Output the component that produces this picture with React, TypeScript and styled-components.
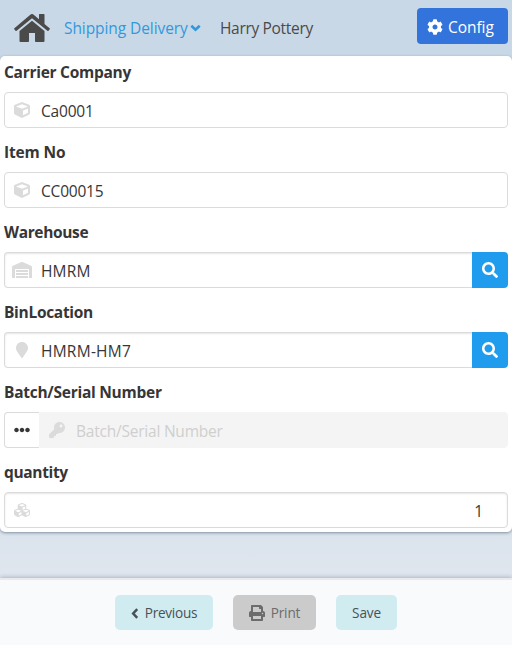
import React from "react";
import styled, { createGlobalStyle, css } from "styled-components";
import {
  FaCog, FaCube, FaCubes, FaWarehouse,
  FaMapMarker, FaKey, FaSearch, FaEllipsisH, FaPrint,
} from "react-icons/fa";

const Global = createGlobalStyle`
  *, *::before, *::after { box-sizing: border-box; }
  html, body, #root { height: 100%; }
  body {
    margin: 0;
    overflow: hidden;
    background: #dee5ee;
    color: #363636;
    font: 16px/24px "Open Sans", "Noto Sans", sans-serif;
  }
  button, input { font: inherit; color: inherit; margin: 0; }
  svg { display: block; flex: none; }
`;

const Page = styled.div`
  display: flex;
  flex-direction: column;
  height: 645px;
  background: linear-gradient(#c9d8e7 0 60px, #dbe3ed 532px, #dfe6ee 577px);
`;

const Header = styled.header`
  display: flex;
  align-items: flex-start;
  height: 56px;
  padding: 0 4px 0 14px;
`;

const HomeLink = styled.a`
  margin-top: 14px;
  color: #4a4a4a;
`;

const Text = styled.span<{ $spacing?: number }>`
  letter-spacing: ${(p) => p.$spacing ?? 0}px;
  white-space: nowrap;
`;

const MenuLink = styled.a`
  display: flex;
  align-items: center;
  width: 138px;
  margin: 16px 18px 0 14px;
  gap: 2px;
  font-size: 15.5px;
  color: #3298dc;
`;

const UserName = styled.span`
  margin-top: 16px;
  font-size: 15.5px;
  color: #4a4a4a;
`;

const ConfigButton = styled.button`
  display: flex;
  align-items: center;
  gap: 5px;
  width: 91px;
  height: 36px;
  margin: 8px 0 0 auto;
  padding: 1px 0 0 10px;
  border: 0;
  border-radius: 4px;
  background: #3273dc;
  color: #fff;
  font-size: 15.5px;
`;

const Card = styled.main`
  height: 476px;
  padding: 4px;
  background: #fff;
  border-radius: 5px;
  box-shadow: 0 1px 3px rgba(40, 60, 80, 0.5);
`;

const Field = styled.section`
  height: 80px;
`;

const Label = styled.label`
  display: block;
  height: 32px;
  font-size: 15.5px;
  font-weight: 700;
`;

const Row = styled.div`
  display: flex;
  height: 36px;
`;

const Control = styled.div<{ $inset?: boolean; $disabled?: boolean; $join?: "left" | "right" }>`
  display: flex;
  align-items: center;
  flex: 1;
  min-width: 0;
  padding-right: 24px;
  border: 1px solid #dbdbdb;
  border-radius: ${(p) => (p.$join === "left" ? "0 4px 4px 0" : p.$join === "right" ? "4px 0 0 4px" : "4px")};
  ${(p) => p.$join === "right" && css`border-right: 0;`}
  ${(p) => p.$inset && css`box-shadow: inset 0 1px 2px rgba(10, 10, 10, 0.1);`}
  ${(p) => p.$disabled && css`
    background: #f4f4f4;
    border-color: #f4f4f4;
    color: #cfcfcf;
  `}
`;

const IconSlot = styled.span`
  display: flex;
  justify-content: center;
  width: 34px;
  margin-right: 2px;
  color: #dbdbdb;
`;

const Value = styled.span<{ $right?: boolean; $spacing?: number }>`
  flex: 1;
  padding-top: 2px;
  font-size: 15.5px;
  letter-spacing: ${(p) => p.$spacing ?? 0}px;
  text-align: ${(p) => (p.$right ? "right" : "left")};
`;

const SearchButton = styled.button`
  display: flex;
  align-items: center;
  justify-content: center;
  width: 36px;
  padding: 0;
  border: 0;
  border-radius: 0 4px 4px 0;
  background: #209cee;
  color: #fff;
`;

const MoreButton = styled.button`
  display: flex;
  align-items: center;
  justify-content: center;
  width: 35px;
  padding: 0 1px 0 0;
  border: 1px solid #dbdbdb;
  border-right: 0;
  border-radius: 4px 0 0 4px;
  background: #fff;
`;

const Footer = styled.footer`
  display: flex;
  justify-content: center;
  gap: 20px;
  height: 67px;
  margin-top: auto;
  padding-top: 15px;
  border-top: 2px solid #e7ebf0;
  background: #f8fafc;
  box-shadow: 0 -1px 4px rgba(60, 75, 90, 0.3);
`;

const Action = styled.button<{ $width: number; $muted?: boolean }>`
  display: flex;
  align-items: center;
  justify-content: center;
  gap: 6px;
  width: ${(p) => p.$width}px;
  height: 35px;
  padding: 1px 0 0;
  border: 0;
  border-radius: 5px;
  background: ${(p) => (p.$muted ? "#cbcbcb" : "#d1ecf1")};
  color: ${(p) => (p.$muted ? "#6c6c6c" : "#485156")};
  font-size: 13.6px;
`;

const HomeIcon = () => (
  <svg width="36" height="28" viewBox="0 0 36 28" fill="currentColor">
    <path d="M16.6.6a2.1 2.1 0 0 1 2.8 0L25 5.3V.6q0-.6.6-.6h4.3q.6 0 .6.6v9.3l5.1 4.3q.6.5.1 1.1l-1.2 1.4q-.5.6-1.1.1L18 4.3 2.6 16.8q-.6.5-1.1-.1L.3 15.3q-.5-.6.1-1.1z" />
    <path d="M18 6.7 30.5 17v10q0 1-1 1H21.9q-.9 0-.9-.9V19h-6v8.1q0 .9-.9.9H6.5q-1 0-1-1V17z" />
  </svg>
);

const ChevronDownIcon = () => (
  <svg width="11" height="8" viewBox="0 0 11 8" fill="none" stroke="currentColor" strokeWidth="2.7">
    <path d="M1.3 1.7 5.5 5.7 9.7 1.7" />
  </svg>
);

const ChevronLeftIcon = () => (
  <svg width="8" height="11" viewBox="0 0 8 11" fill="none" stroke="currentColor" strokeWidth="2.5">
    <path d="M6.2 1.2 2.2 5.5 6.2 9.8" />
  </svg>
);

type FieldSpec = {
  label: string;
  labelSpacing: number;
  value: string;
  valueSpacing: number;
  icon: React.ReactNode;
  inset?: boolean;
  search?: boolean;
  more?: boolean;
  right?: boolean;
};

const fields: FieldSpec[] = [
  { label: "Carrier Company", labelSpacing: -0.28, value: "Ca0001", valueSpacing: -0.2, icon: <FaCube size={16} /> },
  { label: "Item No", labelSpacing: -0.15, value: "CC00015", valueSpacing: -0.2, icon: <FaCube size={16} /> },
  { label: "Warehouse", labelSpacing: -0.35, value: "HMRM", valueSpacing: 0.15, icon: <FaWarehouse size={20} />, inset: true, search: true },
  { label: "BinLocation", labelSpacing: -0.3, value: "HMRM-HM7", valueSpacing: 0.25, icon: <FaMapMarker size={16} />, inset: true, search: true },
  { label: "Batch/Serial Number", labelSpacing: -0.26, value: "Batch/Serial Number", valueSpacing: -0.22, icon: <FaKey size={16} />, more: true },
  { label: "quantity", labelSpacing: -0.35, value: "1", valueSpacing: 0, icon: <FaCubes size={16} />, inset: true, right: true },
];

const FormField = ({ spec }: { spec: FieldSpec }) => (
  <Field>
    <Label><Text $spacing={spec.labelSpacing}>{spec.label}</Text></Label>
    <Row>
      {spec.more && <MoreButton aria-label="More"><FaEllipsisH size={16} /></MoreButton>}
      <Control $inset={spec.inset} $disabled={spec.more} $join={spec.search ? "right" : spec.more ? "left" : undefined}>
        <IconSlot>{spec.icon}</IconSlot>
        <Value $right={spec.right} $spacing={spec.valueSpacing}>{spec.value}</Value>
      </Control>
      {spec.search && <SearchButton aria-label="Search"><FaSearch size={16} /></SearchButton>}
    </Row>
  </Field>
);

export default function App() {
  return (
    <>
      <Global />
      <Page>
        <Header>
          <HomeLink aria-label="Home"><HomeIcon /></HomeLink>
          <MenuLink><Text $spacing={-0.08}>Shipping Delivery</Text><ChevronDownIcon /></MenuLink>
          <UserName><Text $spacing={-0.32}>Harry Pottery</Text></UserName>
          <ConfigButton><FaCog size={16} /><Text $spacing={-0.05}>Config</Text></ConfigButton>
        </Header>
        <Card>
          {fields.map((spec) => <FormField key={spec.label} spec={spec} />)}
        </Card>
        <Footer>
          <Action $width={98}><ChevronLeftIcon /><Text $spacing={-0.25}>Previous</Text></Action>
          <Action $width={83} $muted><FaPrint size={16} /><Text $spacing={-0.15}>Print</Text></Action>
          <Action $width={61}><Text $spacing={-0.15}>Save</Text></Action>
        </Footer>
      </Page>
    </>
  );
}
